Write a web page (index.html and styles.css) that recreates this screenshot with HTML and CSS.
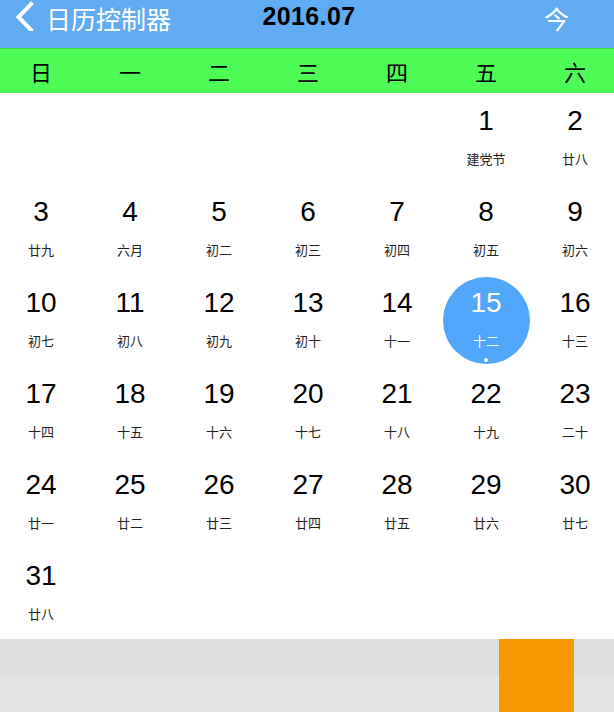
FILE: index.html
```html
<!DOCTYPE html>
<html lang="zh">
<head>
<meta charset="utf-8">
<title>日历控制器</title>
<link rel="stylesheet" href="styles.css">
</head>
<body>
<header class="nav">
  <div class="nav-left">
    <svg class="back" width="20" height="30" viewBox="0 0 20 30"><path d="M16 3 L3.5 16 L16 29" fill="none" stroke="#fff" stroke-width="4" stroke-linecap="square" stroke-linejoin="miter"/></svg>
    <span class="nav-title">日历控制器</span>
  </div>
  <div class="nav-month">2016.07</div>
  <div class="nav-right">今</div>
</header>
<div class="weekbar">
  <div class="week">
    <span>日</span><span>一</span><span>二</span><span>三</span><span>四</span><span>五</span><span>六</span>
  </div>
</div>
<main class="cal">
  <div class="grid">
    <div class="cell"></div><div class="cell"></div><div class="cell"></div><div class="cell"></div><div class="cell"></div>
    <div class="cell"><div class="day"><span class="num">1</span><span class="lunar">建党节</span></div></div>
    <div class="cell"><div class="day"><span class="num">2</span><span class="lunar">廿八</span></div></div>
    <div class="cell"><div class="day"><span class="num">3</span><span class="lunar">廿九</span></div></div>
    <div class="cell"><div class="day"><span class="num">4</span><span class="lunar">六月</span></div></div>
    <div class="cell"><div class="day"><span class="num">5</span><span class="lunar">初二</span></div></div>
    <div class="cell"><div class="day"><span class="num">6</span><span class="lunar">初三</span></div></div>
    <div class="cell"><div class="day"><span class="num">7</span><span class="lunar">初四</span></div></div>
    <div class="cell"><div class="day"><span class="num">8</span><span class="lunar">初五</span></div></div>
    <div class="cell"><div class="day"><span class="num">9</span><span class="lunar">初六</span></div></div>
    <div class="cell"><div class="day"><span class="num">10</span><span class="lunar">初七</span></div></div>
    <div class="cell"><div class="day"><span class="num">11</span><span class="lunar">初八</span></div></div>
    <div class="cell"><div class="day"><span class="num">12</span><span class="lunar">初九</span></div></div>
    <div class="cell"><div class="day"><span class="num">13</span><span class="lunar">初十</span></div></div>
    <div class="cell"><div class="day"><span class="num">14</span><span class="lunar">十一</span></div></div>
    <div class="cell"><div class="day selected"><span class="num">15</span><span class="lunar">十二</span><span class="dot"></span></div></div>
    <div class="cell"><div class="day"><span class="num">16</span><span class="lunar">十三</span></div></div>
    <div class="cell"><div class="day"><span class="num">17</span><span class="lunar">十四</span></div></div>
    <div class="cell"><div class="day"><span class="num">18</span><span class="lunar">十五</span></div></div>
    <div class="cell"><div class="day"><span class="num">19</span><span class="lunar">十六</span></div></div>
    <div class="cell"><div class="day"><span class="num">20</span><span class="lunar">十七</span></div></div>
    <div class="cell"><div class="day"><span class="num">21</span><span class="lunar">十八</span></div></div>
    <div class="cell"><div class="day"><span class="num">22</span><span class="lunar">十九</span></div></div>
    <div class="cell"><div class="day"><span class="num">23</span><span class="lunar">二十</span></div></div>
    <div class="cell"><div class="day"><span class="num">24</span><span class="lunar">廿一</span></div></div>
    <div class="cell"><div class="day"><span class="num">25</span><span class="lunar">廿二</span></div></div>
    <div class="cell"><div class="day"><span class="num">26</span><span class="lunar">廿三</span></div></div>
    <div class="cell"><div class="day"><span class="num">27</span><span class="lunar">廿四</span></div></div>
    <div class="cell"><div class="day"><span class="num">28</span><span class="lunar">廿五</span></div></div>
    <div class="cell"><div class="day"><span class="num">29</span><span class="lunar">廿六</span></div></div>
    <div class="cell"><div class="day"><span class="num">30</span><span class="lunar">廿七</span></div></div>
    <div class="cell"><div class="day"><span class="num">31</span><span class="lunar">廿八</span></div></div>
    <div class="cell"></div><div class="cell"></div><div class="cell"></div><div class="cell"></div><div class="cell"></div><div class="cell"></div>
  </div>
</main>
<footer class="foot">
  <div class="strip strip-a"></div>
  <div class="strip strip-b"></div>
  <div class="badge"></div>
</footer>
</body>
</html>
```
FILE: styles.css
```css
html, body {
  margin: 0;
  padding: 0;
}
body {
  width: 614px;
  height: 712px;
  overflow: hidden;
  background: #fff;
  font-family: "Liberation Sans", "Noto Sans CJK SC", sans-serif;
  color: #000;
}
.nav {
  height: 48px;
  background: #61abf2;
  display: grid;
  grid-template-columns: 1fr auto 1fr;
  align-items: start;
}
.nav-left {
  display: flex;
  align-items: flex-start;
  padding-left: 15px;
}
.back {
  display: block;
  margin-right: 11px;
  margin-top: 1px;
}
.nav-title {
  font-family: "Noto Sans CJK SC", sans-serif;
  font-size: 25px;
  line-height: 36px;
  color: #fff;
}
.nav-month {
  font-family: "Liberation Sans", sans-serif;
  font-weight: bold;
  font-size: 25px;
  letter-spacing: 0.4px;
  line-height: 32px;
  padding-left: 4px;
}
.nav-right {
  justify-self: end;
  padding-right: 45px;
  font-family: "Noto Sans CJK SC", sans-serif;
  font-size: 25px;
  line-height: 36px;
  color: #fff;
}
.weekbar {
  height: 44px;
  border-top: 1px solid #44dc4b;
  background: #4dfd55;
  overflow: hidden;
}
.week {
  display: grid;
  grid-template-columns: repeat(7, 89px);
  margin-left: -3.5px;
  height: 44px;
  align-items: center;
}
.week span {
  text-align: center;
  font-family: "Noto Sans CJK SC", sans-serif;
  font-size: 22px;
  line-height: 32px;
  color: #000;
}
.cal {
  overflow: hidden;
}
.grid {
  display: grid;
  grid-template-columns: repeat(7, 89px);
  grid-auto-rows: 91px;
  margin-left: -3.5px;
}
.cell {
  display: flex;
  align-items: center;
  justify-content: center;
}
.day {
  width: 87px;
  height: 87px;
  border-radius: 50%;
  display: flex;
  flex-direction: column;
  align-items: center;
  box-sizing: border-box;
  padding-top: 10px;
}
.num {
  font-family: "Liberation Sans", sans-serif;
  font-size: 28px;
  line-height: 32px;
  color: #000;
}
.lunar {
  margin-top: 12px;
  font-family: "Noto Sans CJK SC", sans-serif;
  font-size: 13px;
  line-height: 19px;
  color: #222;
}
.selected {
  background: #51a7fb;
}
.selected .num,
.selected .lunar {
  color: #fff;
}
.dot {
  margin-top: 7.5px;
  width: 4px;
  height: 4px;
  border-radius: 50%;
  background: #fff;
}
.foot {
  position: relative;
  height: 73px;
}
.strip-a {
  height: 38px;
  background: #dfdfdf;
}
.strip-b {
  height: 35px;
  background: #e5e5e5;
}
.badge {
  position: absolute;
  left: 499px;
  top: 0;
  width: 75px;
  height: 73px;
  background: #fa9800;
}
```
